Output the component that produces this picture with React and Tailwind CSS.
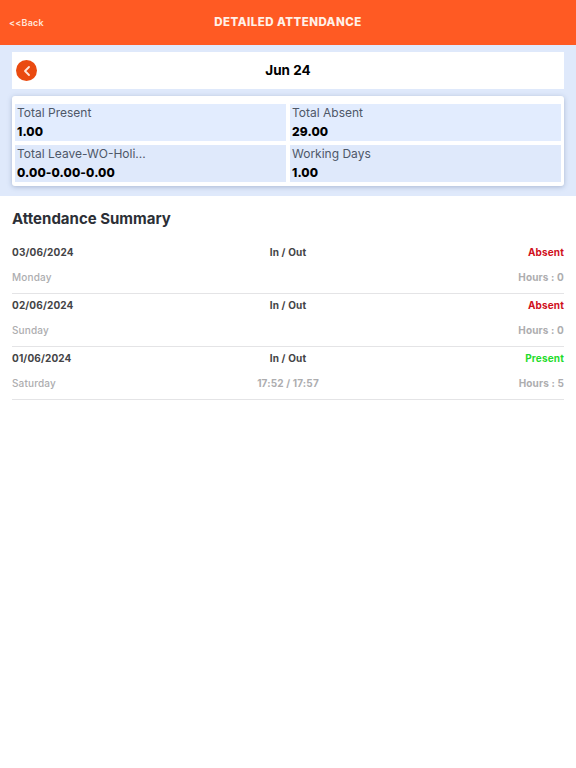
import { ChevronLeft } from "lucide-react";

const stats = [
  { label: "Total Present", value: "1.00", tint: "bg-[#e2ecfe]" },
  { label: "Total Absent", value: "29.00", tint: "bg-[#e2ecfe]" },
  { label: "Total Leave-WO-Holi...", value: "0.00-0.00-0.00", tint: "bg-[#dfe9fb]" },
  { label: "Working Days", value: "1.00", tint: "bg-[#dfe9fb]" },
];

const rows = [
  { date: "03/06/2024", day: "Monday", times: "", status: "Absent", hours: "Hours : 0" },
  { date: "02/06/2024", day: "Sunday", times: "", status: "Absent", hours: "Hours : 0" },
  { date: "01/06/2024", day: "Saturday", times: "17:52 / 17:57", status: "Present", hours: "Hours : 5" },
];

function Row({ row }) {
  return (
    <div className="h-[53px] border-b border-[#e4e4e6]">
      <div className="grid h-[23px] grid-cols-3 items-center text-[10px] font-bold tracking-[0.15px] text-[#444446]">
        <span>{row.date}</span>
        <span className="text-center">In / Out</span>
        <span className={row.status === "Present" ? "text-right text-[#1fdc2c]" : "text-right text-[#d0101c]"}>
          {row.status}
        </span>
      </div>
      <div className="grid h-[26px] grid-cols-3 items-center text-[10px] tracking-[0.15px] text-[#adadaf]">
        <span className="font-medium">{row.day}</span>
        <span className="text-center font-bold">{row.times}</span>
        <span className="text-right font-bold">{row.hours}</span>
      </div>
    </div>
  );
}

export default function App() {
  return (
    <div className="min-h-[768px] bg-white font-['Inter',sans-serif]">
      <header className="relative flex h-[45px] items-center justify-center bg-[#ff5a23]">
        <span className="absolute left-[9px] text-[9px] font-semibold tracking-[0.2px] text-[#ffe6da]">&lt;&lt;Back</span>
        <h1 className="text-[11.5px] font-extrabold tracking-[0.45px] text-[#fff0e8]">DETAILED ATTENDANCE</h1>
      </header>

      <section className="bg-[#dfe9fb] px-3 pb-[10px] pt-[7px]">
        <div className="flex h-[37px] items-center bg-white pl-1">
          <span className="flex h-[21px] w-[21px] items-center justify-center rounded-full bg-[#ea4a10]">
            <ChevronLeft className="h-[16px] w-[16px] text-[#ffe6da]" strokeWidth={2.75} />
          </span>
          <span className="flex-1 pr-[25px] text-center text-[13.5px] font-bold text-black">Jun 24</span>
        </div>

        <div className="mt-[7px] grid grid-cols-2 gap-x-[4px] gap-y-[4px] rounded-[3px] bg-white px-[3px] pb-[4px] pt-[8px] shadow-[0_1px_5px_rgba(90,110,150,0.4)]">
          {stats.map((stat) => (
            <div key={stat.label} className={`h-[37px] px-[2px] ${stat.tint}`}>
              <div className="text-[12px] leading-[17px] font-normal text-[#4e5768]">{stat.label}</div>
              <div className="mt-[2px] text-[12px] leading-[17px] font-extrabold tracking-[0.1px] text-black">{stat.value}</div>
            </div>
          ))}
        </div>
      </section>

      <main className="px-3">
        <h2 className="pt-[14px] text-[15px] leading-[18px] font-bold text-[#2c2f36]">Attendance Summary</h2>
        <div className="mt-[13px]">
          {rows.map((row) => (
            <Row key={row.date} row={row} />
          ))}
        </div>
      </main>
    </div>
  );
}
